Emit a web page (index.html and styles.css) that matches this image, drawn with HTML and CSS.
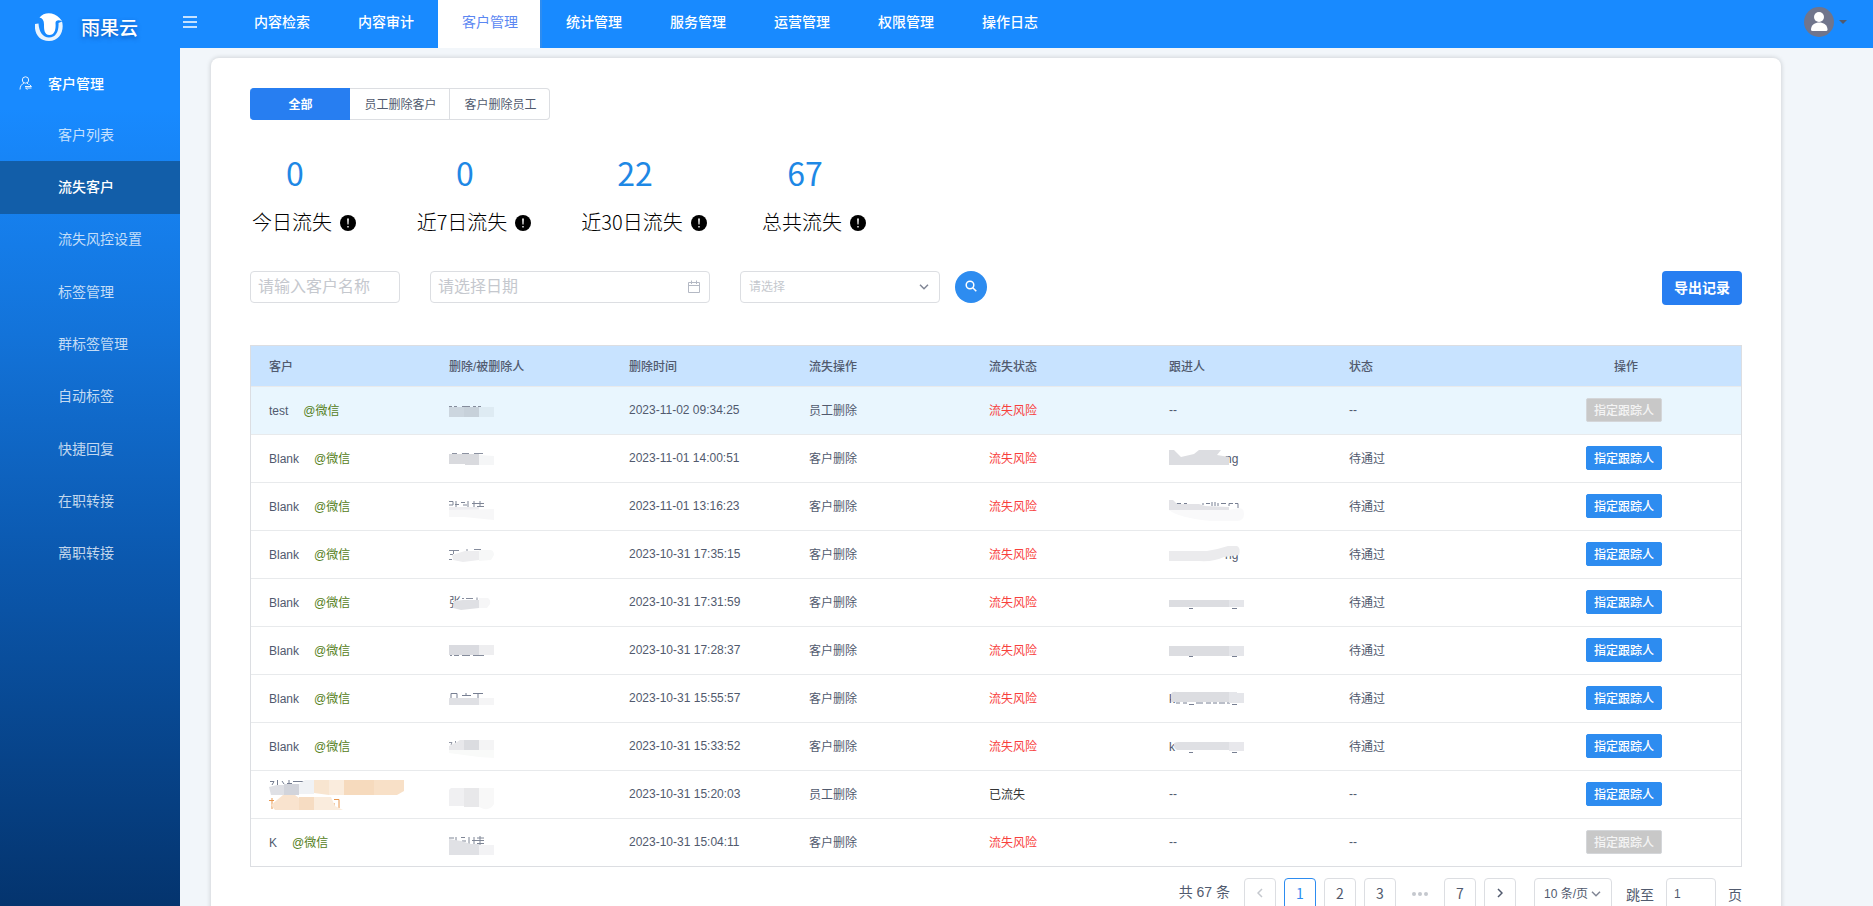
FILE: index.html
```html
<!DOCTYPE html>
<html lang="zh-CN">
<head>
<meta charset="utf-8">
<title>雨果云 - 流失客户</title>
<link rel="stylesheet" href="styles.css">
</head>
<body>
<div class="app">
  <aside class="sidebar">
    <div class="brand">
      <svg class="brand-logo" viewBox="0 0 28 28" aria-hidden="true">
        <path fill="#fff" fill-opacity=".9" d="M0 11 L3.500 10.500 C4 19 8 24.500 14 24.500 C21 24.500 24 18 23.500 10 L27 8.500 C29.500 17 25 28 14 28 C4 28 -1 20 0 11 Z"/>
        <path fill="#fff" d="M4.500 4.500 C9 -1.500 19 -1.200 24.500 5 L27 8 C23.500 6.500 20.500 7 20.500 10 C21 16 20 22 14.500 22 C9 22 9 16 9 11.500 C9 7.500 7.500 5 4.500 4.500 Z"/>
      </svg>
      <span class="brand-name">雨果云</span>
    </div>
    <div class="group">
      <svg class="group-icon" viewBox="0 0 14 14" aria-hidden="true" fill="none" stroke="#fff" stroke-width="1">
        <circle cx="6.500" cy="4" r="3.200"/><path d="M1 13.500 C1 10 3 8 5 7 M8 7 L9.500 8.500 M6 10.500 H12.500 L10.500 8.500 M12.500 12 H6.500 L8.500 13.500"/>
      </svg>
      <span>客户管理</span>
    </div>
    <nav class="menu">
      <a class="menu-item" href="#">客户列表</a>
      <a class="menu-item active" href="#">流失客户</a>
      <a class="menu-item" href="#">流失风控设置</a>
      <a class="menu-item" href="#">标签管理</a>
      <a class="menu-item" href="#">群标签管理</a>
      <a class="menu-item" href="#">自动标签</a>
      <a class="menu-item" href="#">快捷回复</a>
      <a class="menu-item" href="#">在职转接</a>
      <a class="menu-item" href="#">离职转接</a>
    </nav>
  </aside>

  <div class="page">
    <header class="topbar">
      <button class="toggle" type="button" aria-label="收起菜单"><span></span><span></span><span></span></button>
      <nav class="topnav">
        <a href="#">内容检索</a>
        <a href="#">内容审计</a>
        <a class="active" href="#">客户管理</a>
        <a href="#">统计管理</a>
        <a href="#">服务管理</a>
        <a href="#">运营管理</a>
        <a href="#">权限管理</a>
        <a href="#">操作日志</a>
      </nav>
      <button class="user" type="button" aria-label="用户">
        <svg class="avatar" viewBox="0 0 30 30" aria-hidden="true"><circle cx="15" cy="15" r="15" fill="#70758c"/><circle cx="15" cy="10" r="5" fill="#fff"/><path d="M7 22.500 C7 13 23.500 13 23.500 22.500 Q23.500 24 22 24 H8.500 Q7 24 7 22.500 Z" fill="#fff"/></svg>
        <svg class="caret" viewBox="0 0 8 4" aria-hidden="true"><path d="M0 0 H8 L4 4 Z" fill="#515a6e"/></svg>
      </button>
    </header>

    <main class="content">
      <section class="card">
        <div class="tabs">
          <button class="tab active" type="button">全部</button>
          <button class="tab" type="button">员工删除客户</button>
          <button class="tab" type="button">客户删除员工</button>
        </div>

        <div class="stats">
          <div class="stat"><div class="stat-value">0</div><div class="stat-label">今日流失<svg class="info" viewBox="0 0 16 16" aria-hidden="true"><circle cx="8" cy="8" r="8"/><path d="M7 3.500 H9 L8.600 9.500 H7.400 Z M7.200 11 H8.800 V12.500 H7.200 Z" fill="#ddd"/></svg></div></div>
          <div class="stat"><div class="stat-value">0</div><div class="stat-label">近7日流失<svg class="info" viewBox="0 0 16 16" aria-hidden="true"><circle cx="8" cy="8" r="8"/><path d="M7 3.500 H9 L8.600 9.500 H7.400 Z M7.200 11 H8.800 V12.500 H7.200 Z" fill="#ddd"/></svg></div></div>
          <div class="stat"><div class="stat-value">22</div><div class="stat-label">近30日流失<svg class="info" viewBox="0 0 16 16" aria-hidden="true"><circle cx="8" cy="8" r="8"/><path d="M7 3.500 H9 L8.600 9.500 H7.400 Z M7.200 11 H8.800 V12.500 H7.200 Z" fill="#ddd"/></svg></div></div>
          <div class="stat"><div class="stat-value">67</div><div class="stat-label">总共流失<svg class="info" viewBox="0 0 16 16" aria-hidden="true"><circle cx="8" cy="8" r="8"/><path d="M7 3.500 H9 L8.600 9.500 H7.400 Z M7.200 11 H8.800 V12.500 H7.200 Z" fill="#ddd"/></svg></div></div>
        </div>

        <form class="filters">
          <input class="field field-name" type="text" placeholder="请输入客户名称" aria-label="客户名称">
          <label class="field field-date">
            <input type="text" placeholder="请选择日期" aria-label="日期">
            <svg class="calendar" viewBox="0 0 14 14" aria-hidden="true" fill="none" stroke="#b4b9c4"><path d="M1.500 2.500 H12.500 V12.500 H1.500 Z M1.500 5.500 H12.500 M4.500 .5 V4 M9.500 .5 V4"/></svg>
          </label>
          <label class="field field-select">
            <select aria-label="流失状态"><option>请选择</option></select>
            <svg class="chevron" viewBox="0 0 10 6" aria-hidden="true"><path d="M1 .8 L5 4.800 L9 .8"/></svg>
          </label>
          <button class="search" type="button" aria-label="搜索"><svg viewBox="0 0 12 12" aria-hidden="true" fill="none" stroke="#fff" stroke-width="1.500"><circle cx="5" cy="5" r="3.800"/><path d="M7.800 7.800 L11.300 11.300"/></svg></button>
          <button class="export" type="button">导出记录</button>
        </form>

        <table class="table">
          <thead>
            <tr><th>客户</th><th>删除/被删除人</th><th>删除时间</th><th>流失操作</th><th>流失状态</th><th>跟进人</th><th>状态</th><th class="op">操作</th></tr>
          </thead>
          <tbody>
            <tr class="hover">
              <td>test<span class="wx">@微信</span></td>
              <td><svg class="mask" viewBox="0 0 46 32" width="46" height="32"><path stroke="#858c9c" d="M0 12.500 H3 M5 12.500 H8 M13 12.500 H21 M24 12.500 H27 M29 12.500 H32"/><path fill="#ccd6df" d="M0 13 H15 V23 H0 Z"/><path fill="#c7d1da" d="M15 13 H30 V23 H15 Z"/><path fill="#deebf3" d="M30 13 H45 V23 H30 Z"/></svg></td>
              <td>2023-11-02 09:34:25</td><td>员工删除</td><td class="risk">流失风险</td><td>--</td><td>--</td>
              <td class="op"><button class="assign" type="button" disabled>指定跟踪人</button></td>
            </tr>
            <tr>
              <td>Blank<span class="wx">@微信</span></td>
              <td><svg class="mask" viewBox="0 0 46 32" width="46" height="32"><path stroke="#8c92a1" d="M3 11.500 H8 M13 11.500 H20 M25 11.500 H34"/><path fill="#d9dade" d="M0 12 H30 V23 H16 V22 H0 Z"/><path fill="#f5f6f7" d="M30 13 L45 14 V23 H30 Z"/></svg></td>
              <td>2023-11-01 14:00:51</td><td>客户删除</td><td class="risk">流失风险</td>
              <td><svg class="mask" viewBox="0 0 76 32" width="76" height="32"><text x="56" y="21">ng</text><path fill="#dcdde1" d="M0 8 H5 L12 15 L25 12 L30 8 H52 L48 13 L60 15 V23 H0 Z"/></svg></td>
              <td>待通过</td><td class="op"><button class="assign" type="button">指定跟踪人</button></td>
            </tr>
            <tr>
              <td>Blank<span class="wx">@微信</span></td>
              <td><svg class="mask" viewBox="0 0 46 32" width="46" height="32"><path fill="none" stroke="#7f8696" d="M0 11.500 H4 V15 H0 M7 11 V17 M6 14.500 H10 M12 12.500 H16 M19 11 V17 M14 15 H18 M25 11 V17 M23 13.500 H35 M28 16.500 H35 M31 11 V17"/><path fill="#ededf0" d="M0 17 H30 V20 H0 Z"/><path fill="#f7f7f8" d="M0 20 L45 19 V30 L15 27 H0 Z"/></svg></td>
              <td>2023-11-01 13:16:23</td><td>客户删除</td><td class="risk">流失风险</td>
              <td><svg class="mask" viewBox="0 0 76 32" width="76" height="32"><path fill="none" stroke="#777f92" d="M8 16 V13.500 H12 M15 13.500 H18 M34 13 V15 M37 13.500 H41 M43 12 V16 M46 12 V16 M49 13 V16 M52 13.500 H57 M60 16 V13.500 H64 M66 13.500 H69 V18"/><path fill="#e3e3e7" d="M0 10 H4 L8 14 H30 L36 16 L60 17 V20 H0 Z"/><path fill="#f9f9fa" d="M0 20 H60 L70 18 Q75 18 75 24 Q75 31 68 31 H42 Q10 28 0 20 Z"/></svg></td>
              <td>待通过</td><td class="op"><button class="assign" type="button">指定跟踪人</button></td>
            </tr>
            <tr>
              <td>Blank<span class="wx">@微信</span></td>
              <td><svg class="mask" viewBox="0 0 46 32" width="46" height="32"><path fill="none" stroke="#858c9c" d="M0 12.500 H10 M4.500 12 V16 M1 16.500 H4 M18 11 V14 M25 11.500 H32 M0 21.500 H3"/><path fill="#ededef" d="M3 17 L16 13 H30 V22 L14 24 L4 22 Z"/><path fill="#f7f8f8" d="M30 12 H42 Q45 13 45 17 L42 22 L30 23 Z"/></svg></td>
              <td>2023-10-31 17:35:15</td><td>客户删除</td><td class="risk">流失风险</td>
              <td><svg class="mask" viewBox="0 0 76 32" width="76" height="32"><text x="56" y="21">ng</text><path fill="#ebebed" d="M0 13 H38 Q50 11 59 8 H68 Q72 10 70 17 L55 19 Q45 24 30 23 H0 Z"/></svg></td>
              <td>待通过</td><td class="op"><button class="assign" type="button">指定跟踪人</button></td>
            </tr>
            <tr>
              <td>Blank<span class="wx">@微信</span></td>
              <td><svg class="mask" viewBox="0 0 46 32" width="46" height="32"><text x="0" y="21">张</text><path stroke="#858c9c" d="M13 12.500 H15 M17 12.500 H24 M28 11.500 V14"/><path fill="#dfe0e4" d="M5 15 L14 14 H30 V22 L12 24 L4 22 Z"/><path fill="#f6f6f7" d="M30 12 H39 Q42 14 41 18 L38 22 H30 Z"/></svg></td>
              <td>2023-10-31 17:31:59</td><td>客户删除</td><td class="risk">流失风险</td>
              <td><svg class="mask" viewBox="0 0 76 32" width="76" height="32"><path fill="none" stroke="#777f92" d="M20 22.500 H24 M63 22.500 H68"/><path fill="#dcdde1" d="M0 14 H60 V21 H0 Z"/><path fill="#e5e6ea" d="M60 14 H75 V21 H60 Z"/></svg></td>
              <td>待通过</td><td class="op"><button class="assign" type="button">指定跟踪人</button></td>
            </tr>
            <tr>
              <td>Blank<span class="wx">@微信</span></td>
              <td><svg class="mask" viewBox="0 0 46 32" width="46" height="32"><path stroke="#858c9c" d="M1 21.500 H3 M5 21.500 H10 M13 21.500 H21 M24 21.500 H35"/><path fill="#dadbe0" d="M0 11 H30 V21 H0 Z"/><path fill="#eeeef0" d="M30 11 H45 V21 H30 Z"/></svg></td>
              <td>2023-10-31 17:28:37</td><td>客户删除</td><td class="risk">流失风险</td>
              <td><svg class="mask" viewBox="0 0 76 32" width="76" height="32"><path fill="none" stroke="#777f92" d="M20 22.500 H24 M63 22.500 H68"/><path fill="#dcdde1" d="M0 12 H60 V22 H0 Z"/><path fill="#e5e6ea" d="M60 12 H75 V22 H60 Z"/></svg></td>
              <td>待通过</td><td class="op"><button class="assign" type="button">指定跟踪人</button></td>
            </tr>
            <tr>
              <td>Blank<span class="wx">@微信</span></td>
              <td><svg class="mask" viewBox="0 0 46 32" width="46" height="32"><path fill="none" stroke="#777f92" d="M2 16 V11.500 H8 V16 M13 13.500 H22 M17 11 V14 M24 11.500 H34 M29 12 V16"/><path fill="#dfe0e4" d="M0 16 H30 V23 H0 Z"/><path fill="#f5f5f6" d="M30 16 H45 V23 H30 Z"/></svg></td>
              <td>2023-10-31 15:55:57</td><td>客户删除</td><td class="risk">流失风险</td>
              <td><svg class="mask" viewBox="0 0 76 32" width="76" height="32"><text x="0" y="21">k</text><path fill="none" stroke="#777f92" d="M7 21 H11 M14 21 H18 M20 22.500 H25 M27 21 H34 M37 21 H42 M44 21 H48 M50 21 H56 M58 21 H61 M63 22.500 H68"/><path fill="#dcdde1" d="M2 12 Q3 9 8 10 H60 V20 H2 Z"/><path fill="#e5e6ea" d="M60 10 H68 V11 H75 V21 H60 Z"/></svg></td>
              <td>待通过</td><td class="op"><button class="assign" type="button">指定跟踪人</button></td>
            </tr>
            <tr>
              <td>Blank<span class="wx">@微信</span></td>
              <td><svg class="mask" viewBox="0 0 46 32" width="46" height="32"><path fill="none" stroke="#9297a5" d="M0 12.500 H3 L2 15 M6.500 11 V15"/><path fill="#e8e8eb" d="M8 12 L11 10 H15 V20 H0 V16 Z"/><path fill="#dbdce0" d="M15 10 H30 V20 H15 Z"/><path fill="#f4f4f5" d="M30 10 H45 V20 H30 Z"/><path fill="#f9faf9" d="M0 20 H45 V28 L30 27 L0 23 Z"/></svg></td>
              <td>2023-10-31 15:33:52</td><td>客户删除</td><td class="risk">流失风险</td>
              <td><svg class="mask" viewBox="0 0 76 32" width="76" height="32"><text x="0" y="21">k</text><path fill="none" stroke="#777f92" d="M20 22.500 H24 M63 22.500 H68"/><path fill="#dfe0e4" d="M5 13 Q7 12 10 12 H60 V20 H8 Q4 18 5 13 Z"/><path fill="#e8e8ec" d="M60 12 H75 V21 H60 Z"/></svg></td>
              <td>待通过</td><td class="op"><button class="assign" type="button">指定跟踪人</button></td>
            </tr>
            <tr>
              <td><svg class="mask" viewBox="0 0 136 32" width="136" height="32"><path fill="none" stroke="#777f92" d="M1 3.500 H5 L3 7 M8.500 2 V7 M13 3 L15 6 M18 5.500 H23 M20 2 V7 M24 3.500 H35 M27 6.500 H33"/><path fill="none" stroke="#e8954a" d="M0 22.500 H5 M3 20 V31 M65 21.500 H70 V30 M65 25 V29"/><path fill="#dfe0e5" d="M0 9 L8 7 H15 V17 H2 Z"/><path fill="#d2d4db" d="M15 6 H30 V17 H15 Z"/><path fill="#f0f2f5" d="M30 6 L36 2 H45 V16 H30 Z"/><path fill="#f8e5d0" d="M45 2 H60 V17 L45 15 Z"/><path fill="#faecdd" d="M60 2 H75 V17 H60 Z"/><path fill="#f6dabd" d="M75 2 H105 V17 H75 Z"/><path fill="#f8e0c7" d="M105 2 H135 V13 L128 17 H105 Z"/><path fill="#f9e3ce" d="M2 27 L14 17 H26 L30 20 V32 H6 Z"/><path fill="#f6dcc2" d="M30 19 H45 V32 H30 Z"/><path fill="#faecdd" d="M45 19 H62 L66 28 L74 32 H45 Z"/></svg></td>
              <td><svg class="mask" viewBox="0 0 46 32" width="46" height="32"><path fill="#f0f0f2" d="M2 10 H15 V28 H0 V12 Z"/><path fill="#e8e8ea" d="M15 10 H30 V29 H15 Z"/><path fill="#f8f8f8" d="M30 10 H45 V26 Q42 32 35 31 L30 29 Z"/></svg></td>
              <td>2023-10-31 15:20:03</td><td>员工删除</td><td class="lost">已流失</td><td>--</td><td>--</td>
              <td class="op"><button class="assign" type="button">指定跟踪人</button></td>
            </tr>
            <tr>
              <td>K<span class="wx">@微信</span></td>
              <td><svg class="mask" viewBox="0 0 46 32" width="46" height="32"><path fill="none" stroke="#7f8696" d="M0 12 H5 M7 11 V15 M12 11.500 H16 M13 15 H17 M20 11 V18 M25 11 V19 M23 14.500 H35 M28 12 H35 M28 17.500 H35 M31 10 V19"/><path fill="#e0e1e5" d="M0 13 L12 15 L22 18 H30 V29 H0 Z"/><path fill="#f3f3f5" d="M30 19 H45 V29 H30 Z"/></svg></td>
              <td>2023-10-31 15:04:11</td><td>客户删除</td><td class="risk">流失风险</td><td>--</td><td>--</td>
              <td class="op"><button class="assign" type="button" disabled>指定跟踪人</button></td>
            </tr>
          </tbody>
        </table>

        <div class="pager">
          <span class="total">共 67 条</span>
          <div class="pages">
            <button class="pg prev" type="button" aria-label="上一页" disabled><svg viewBox="0 0 6 10" aria-hidden="true"><path d="M5 1 L1 5 L5 9"/></svg></button>
            <button class="pg active" type="button">1</button>
            <button class="pg" type="button">2</button>
            <button class="pg" type="button">3</button>
            <span class="dots"><i></i><i></i><i></i></span>
            <button class="pg" type="button">7</button>
            <button class="pg next" type="button" aria-label="下一页"><svg viewBox="0 0 6 10" aria-hidden="true"><path d="M1 1 L5 5 L1 9"/></svg></button>
          </div>
          <label class="field size">
            <select aria-label="每页条数"><option>10 条/页</option></select>
            <svg class="chevron" viewBox="0 0 10 6" aria-hidden="true"><path d="M1 .8 L5 4.800 L9 .8"/></svg>
          </label>
          <label class="jump">跳至<input class="field" type="text" value="1">页</label>
        </div>
      </section>
    </main>
  </div>
</div>
</body>
</html>
```
FILE: styles.css
```css
* { box-sizing: border-box; }

body {
  margin: 0;
  font-family: "Liberation Sans", "Noto Sans CJK SC", sans-serif;
  font-size: 12px;
  color: #515a6e;
  background: #f2f6fa;
}

button, input, select { font: inherit; color: inherit; margin: 0; }
button { cursor: pointer; padding: 0; border: 0; background: none; }
a { text-decoration: none; color: inherit; }

.app { display: flex; height: 100vh; overflow: hidden; }

/* Sidebar */
.sidebar {
  flex: 0 0 180px;
  color: #fff;
  font-size: 14px;
  background: linear-gradient(180deg, #188aff 0, #188aff 12%, #1373d9 37%, #0b58ae 62%, #04346e 100%);
}
.brand { display: flex; align-items: center; gap: 18px; height: 54px; padding-left: 35px; }
.brand-logo { width: 28px; height: 28px; }
.brand-name { padding-bottom: 2px; font-size: 19px; font-weight: 500; text-shadow: 0 2px 4px rgba(0, 40, 120, .5); }
.group { display: flex; align-items: center; gap: 15px; height: 55px; padding: 3px 0 0 19px; font-weight: 500; }
.group-icon { width: 14px; height: 14px; opacity: .9; }
.menu { display: grid; grid-auto-rows: 1fr; height: 471px; }
.menu-item { display: flex; align-items: center; padding: 0 0 3px 58px; color: rgba(255, 255, 255, .75); }
.menu-item.active { color: #fff; font-weight: 500; background: #125ea9; }

/* Top bar */
.page { flex: 1; min-width: 0; display: flex; flex-direction: column; }
.topbar { flex: 0 0 48px; display: flex; color: #fff; background: #188aff; }
.toggle { display: flex; flex-direction: column; gap: 3px; width: 50px; padding: 16px 0 0 3px; }
.toggle span { width: 14px; height: 2px; background: rgba(255, 255, 255, .75); }
.topnav { display: flex; font-size: 14px; font-weight: 500; }
.topnav a { width: 104px; height: 48px; padding-left: 2px; line-height: 44px; text-align: center; border-right: 2px solid #188aff; }
.topnav a.active { color: #5b87f2; font-weight: 400; background: #fff; border-right-color: #2d8cf0; }
.user { display: flex; align-items: center; gap: 5px; height: 44px; margin: 0 26px 0 auto; }
.avatar { width: 30px; height: 30px; }
.caret { width: 8px; height: 4px; }

/* Content */
.content { flex: 1; min-height: 0; overflow: hidden; padding: 10px 92px 0 31px; }
.card { padding: 30px 39px 30px 39px; background: #fff; border-radius: 8px; box-shadow: 0 0 4px 1px rgba(0, 0, 0, .13); }

.tabs { display: flex; }
.tab { width: 100px; height: 32px; padding: 0 0 2px 2px; background: #fff; border: 1px solid #dcdee2; border-left-width: 0; }
.tab:last-child { border-radius: 0 4px 4px 0; }
.tab.active { color: #fff; font-weight: 700; background: #277ef1; border-color: #277ef1; border-radius: 4px 0 0 4px; }

.stats { display: flex; margin: 28px 0 0 -40px; }
.stat { width: 170px; text-align: center; white-space: nowrap; color: #000; }
.stat-value { line-height: 48px; font-family: "Noto Sans CJK SC", sans-serif; font-size: 32px; color: #1e88e5; }
.stat-label { display: flex; align-items: center; justify-content: center; gap: 8px; height: 48px; padding: 2px 0 0 18px; font-family: "Noto Sans CJK SC", sans-serif; font-size: 20px; font-weight: 300; }
.info { width: 16px; height: 16px; margin-top: 4px; }

/* Filters */
.filters { display: flex; align-items: flex-start; margin-top: 27px; }
.field { display: flex; align-items: center; height: 32px; background: #fff; border: 1px solid #dcdee2; border-radius: 4px; }
.field input, .field select { flex: 1; min-width: 0; height: 100%; padding: 0; border: 0; outline: 0; background: none; appearance: none; }
.field-name { width: 150px; padding: 0 7px; font-size: 16px; }
.field-date { width: 280px; margin-left: 30px; padding: 0 8px 0 7px; font-size: 16px; }
.field-select { width: 200px; margin-left: 30px; padding: 0 10px 0 8px; color: #c5c8ce; }
.field input::placeholder, .field-name::placeholder { color: #c5c8ce; }
.calendar { width: 14px; height: 14px; }
.chevron { width: 10px; height: 6px; fill: none; stroke: #808695; stroke-width: 1.5; }
.search { display: flex; align-items: center; justify-content: center; width: 32px; height: 32px; margin-left: 15px; padding-bottom: 2px; border-radius: 50%; background: #2d8cf0; }
.search svg { width: 12px; height: 12px; }
.export { width: 80px; height: 34px; margin-left: auto; padding-bottom: 2px; border-radius: 4px; color: #fff; font-size: 14px; font-weight: 700; background: #277ef1; }

/* Table */
.table { width: 100%; margin-top: 40px; table-layout: fixed; border-collapse: separate; border-spacing: 0; border: 1px solid #dcdee2; border-bottom: 0; }
.table th, .table td { width: 180px; padding: 0 0 2px 18px; text-align: left; border-bottom: 1px solid #e8eaec; }
.table th { height: 41px; font-weight: 500; background: #c8e3ff; }
.table td { height: 48px; }
.table .op { width: auto; padding: 0 0 2px; text-align: center; }
.table .hover td { background: #e9f6fe; }
.table tr:last-child td { border-bottom-color: #dcdee2; }
.wx { margin-left: 15px; color: #558021; }
.table .risk { color: #f8403c; }
.table .lost { color: #333; }
.mask { display: block; }
.mask text { fill: #515a6e; font-size: 12px; }
.assign { height: 24px; margin-right: 4px; padding: 0 7px 1px; border: 1px solid #2d8cf0; border-radius: 2px; color: #fff; font-weight: 500; background: #2d8cf0; }
.assign:disabled { color: #f4f4f4; background: #c8c8c8; border-color: #d4d6d9; }

/* Pagination */
.pager { display: flex; justify-content: flex-end; margin-top: 11px; font-size: 14px; }
.total { margin-right: 14px; line-height: 28px; }
.pages { display: flex; gap: 8px; margin-right: 18px; }
.pg { display: flex; align-items: center; justify-content: center; width: 32px; height: 32px; padding-bottom: 2px; border: 1px solid #dcdee2; border-radius: 4px; font-family: "Noto Sans CJK SC", sans-serif; }
.pg.active { color: #2d8cf0; border-color: #2d8cf0; }
.pg svg { width: 6px; height: 10px; fill: none; stroke: #515a6e; stroke-width: 1.5; }
.pg.prev svg { stroke: #c5c8ce; }
.dots { display: flex; align-items: center; justify-content: center; gap: 2px; width: 32px; }
.dots i { width: 4px; height: 4px; border-radius: 50%; background: #c5c8ce; }
.size { width: 78px; padding: 0 10px 0 9px; font-size: 12px; }
.jump { display: flex; align-items: center; margin-left: 14px; }
.jump input { width: 50px; margin: 0 12px; padding: 0 7px; font-size: 12px; }
```
